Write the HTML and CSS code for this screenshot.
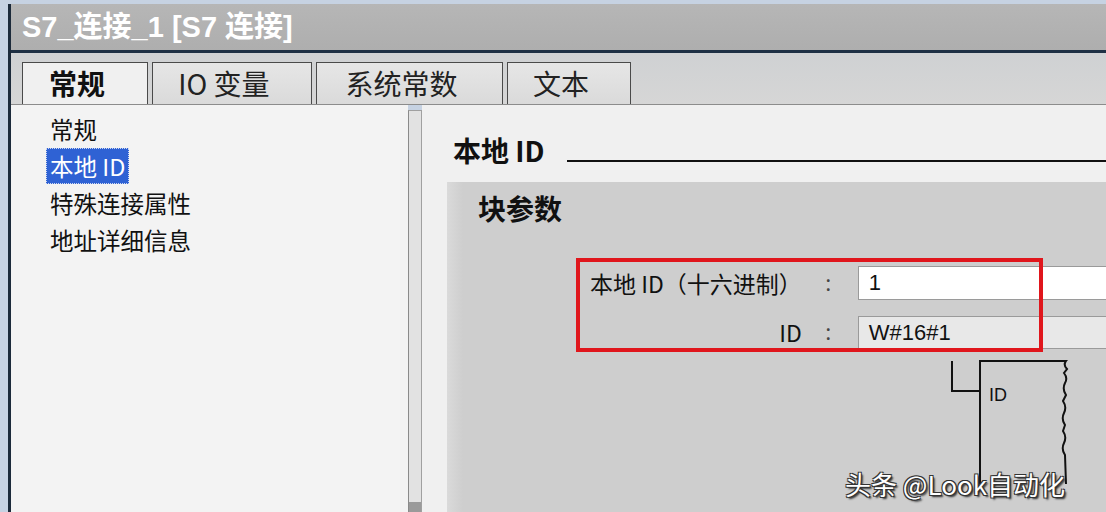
FILE: index.html
```html
<!DOCTYPE html>
<html>
<head>
    <meta charset="UTF-8">
    <title>S7_连接_1 [S7 连接]</title>
    <link rel="stylesheet" href="styles.css">
</head>
<body>
    <div class="window">
        <header class="titlebar">S7_连接_1 [S7 连接]</header>
        <div class="tabbar">
            <div class="tab active">常规</div>
            <div class="tab">IO 变量</div>
            <div class="tab">系统常数</div>
            <div class="tab">文本</div>
        </div>
        <div class="content">
            <ul class="nav">
                <li><span>常规</span></li>
                <li><span class="selected">本地 ID</span></li>
                <li><span>特殊连接属性</span></li>
                <li><span>地址详细信息</span></li>
            </ul>
            <div class="scrollbar"><div class="thumb"></div></div>
            <div class="main">
                <div class="section-head">
                    <span class="section-title">本地 ID</span>
                    <span class="section-line"></span>
                </div>
                <div class="params">
                    <div class="params-title">块参数</div>
                    <div class="form">
                        <div class="label">本地 ID（十六进制）</div>
                        <div class="colon">：</div>
                        <div class="field">1</div>
                        <div class="label">ID</div>
                        <div class="colon">：</div>
                        <div class="field readonly">W#16#1</div>
                        <div class="highlight"></div>
                    </div>
                    <svg class="diagram" width="130" height="130" viewBox="0 0 130 130">
                        <path d="M7 2 V32 H35" fill="none" stroke="#111" stroke-width="2"/>
                        <path d="M35 125 V2 H121 Q118 6 122 10 L119 14 Q123 19 120 24 Q117 30 121 36 L118 42 Q122 48 119 54 Q116 60 120 66 L118 72 Q122 78 119 84 Q116 90 120 96 L121 125"
                              fill="none" stroke="#111" stroke-width="2"/>
                        <text x="44" y="42" font-family="Liberation Sans, sans-serif" font-size="18" fill="#111">ID</text>
                    </svg>
                </div>
            </div>
        </div>
    </div>
    <div class="watermark">头条 @Look自动化</div>
</body>
</html>
```

FILE: styles.css
```css
body {
    margin: 0;
    width: 1106px;
    height: 512px;
    overflow: hidden;
    background-color: #c6d2e2;
    font-family: "Liberation Sans", "Noto Sans CJK SC", sans-serif;
    color: #111;
    position: relative;
}
.window {
    margin-left: 8px;
    margin-top: 4px;
    height: 508px;
    border-left: 3px solid #1c2a3a;
    display: flex;
    flex-direction: column;
}
.titlebar {
    height: 49px;
    flex-shrink: 0;
    box-sizing: border-box;
    padding-left: 11px;
    background: linear-gradient(#b6b6b6, #aeaeae);
    border-bottom: 3px solid #1e3044;
    color: #fff;
    font-size: 29px;
    font-weight: bold;
    line-height: 46px;
}
.tabbar {
    height: 52px;
    flex-shrink: 0;
    box-sizing: border-box;
    background: linear-gradient(#cfd1d3, #d6d6d6);
    border-bottom: 1px solid #8c8c8c;
    display: flex;
    align-items: flex-end;
    gap: 4px;
    padding-left: 11px;
}
.tab {
    height: 42px;
    box-sizing: border-box;
    padding-right: 16px;
    border: 1px solid #4a4a4a;
    border-bottom: none;
    background: linear-gradient(#e6e6e6, #dadada);
    font-family: "Noto Sans CJK SC", sans-serif;
    font-size: 28px;
    line-height: 40px;
    text-align: center;
    color: #222;
}
.tab:nth-child(1) { width: 126px; }
.tab:nth-child(2) { width: 160px; }
.tab:nth-child(3) { width: 187px; }
.tab:nth-child(4) { width: 124px; }
.tab.active {
    background: #f0f0f0;
    font-weight: bold;
    color: #111;
}
.content {
    flex: 1;
    display: flex;
    min-height: 0;
    overflow: hidden;
}
.nav {
    width: 397px;
    margin: 0;
    padding: 6px 0 0 35px;
    box-sizing: border-box;
    list-style: none;
    background: #f3f3f3;
    font-family: "Noto Sans CJK SC", sans-serif;
    font-size: 23.5px;
}
.nav li {
    height: 37px;
    line-height: 37px;
}
.nav span {
    padding: 1px 4px;
}
.nav .selected {
    background: #2f62d4;
    color: #fff;
    outline: 1px dotted #cfd8f0;
    outline-offset: -1px;
}
.scrollbar {
    width: 14px;
    margin-top: 5px;
    box-sizing: border-box;
    border-left: 1px solid #8a8a8a;
    border-right: 1px solid #a0a0a0;
    border-top: 1px solid #a0a0a0;
    background: #e2e2e2;
    display: flex;
    flex-direction: column;
    justify-content: flex-end;
}
.thumb {
    height: 10px;
    background: #9a9a9a;
}
.main {
    flex: 1;
    min-width: 0;
    background: #f0f0f0;
    padding-left: 25px;
    display: flex;
    flex-direction: column;
}
.section-head {
    display: flex;
    flex-shrink: 0;
    align-items: flex-end;
    height: 60px;
    padding-left: 6px;
}
.section-title {
    font-family: "Noto Sans CJK SC", sans-serif;
    font-size: 28px;
    font-weight: bold;
    line-height: 30px;
}
.section-line {
    flex: 1;
    margin-left: 22px;
    margin-bottom: 3px;
    border-bottom: 2px solid #111;
}
.params {
    flex: 1;
    min-height: 0;
    margin-top: 17px;
    background: linear-gradient(90deg, #dadada, #cecece 16px);
    padding-left: 31px;
    display: flex;
    flex-direction: column;
}
.params-title {
    font-family: "Noto Sans CJK SC", sans-serif;
    font-size: 28px;
    font-weight: bold;
    line-height: 30px;
    margin-top: 11px;
}
.form {
    position: relative;
    margin-top: 43px;
    margin-left: 112px;
    display: grid;
    grid-template-columns: auto 56px 1fr;
    row-gap: 15px;
    align-items: center;
    font-family: "Noto Sans CJK SC", sans-serif;
    font-size: 23px;
}
.label {
    text-align: right;
    white-space: nowrap;
}
.colon {
    text-align: center;
    color: #444;
    font-size: 18px;
    padding-left: 6px;
}
.field {
    height: 34px;
    box-sizing: border-box;
    border: 1px solid #9a9a9a;
    border-right: none;
    background: #fff;
    padding-left: 10px;
    line-height: 32px;
    font-family: "Liberation Sans", sans-serif;
    font-size: 22px;
}
.field.readonly {
    background: #e8e8e8;
    height: 33px;
}
.highlight {
    position: absolute;
    left: -14px;
    top: -8px;
    width: 467px;
    height: 94px;
    box-sizing: border-box;
    border: 4px solid #e0161c;
}
.diagram {
    flex-shrink: 0;
    margin-top: 10px;
    margin-left: 467px;
}
.watermark {
    position: absolute;
    left: 845px;
    top: 465px;
    font-family: "Noto Sans CJK SC", sans-serif;
    font-size: 26px;
    color: #fff;
    text-shadow: 1px 1px 0 #333, -1px 1px 0 #333, 1px -1px 0 #333, -1px -1px 0 #333, 2px 2px 2px #222;
}
```
